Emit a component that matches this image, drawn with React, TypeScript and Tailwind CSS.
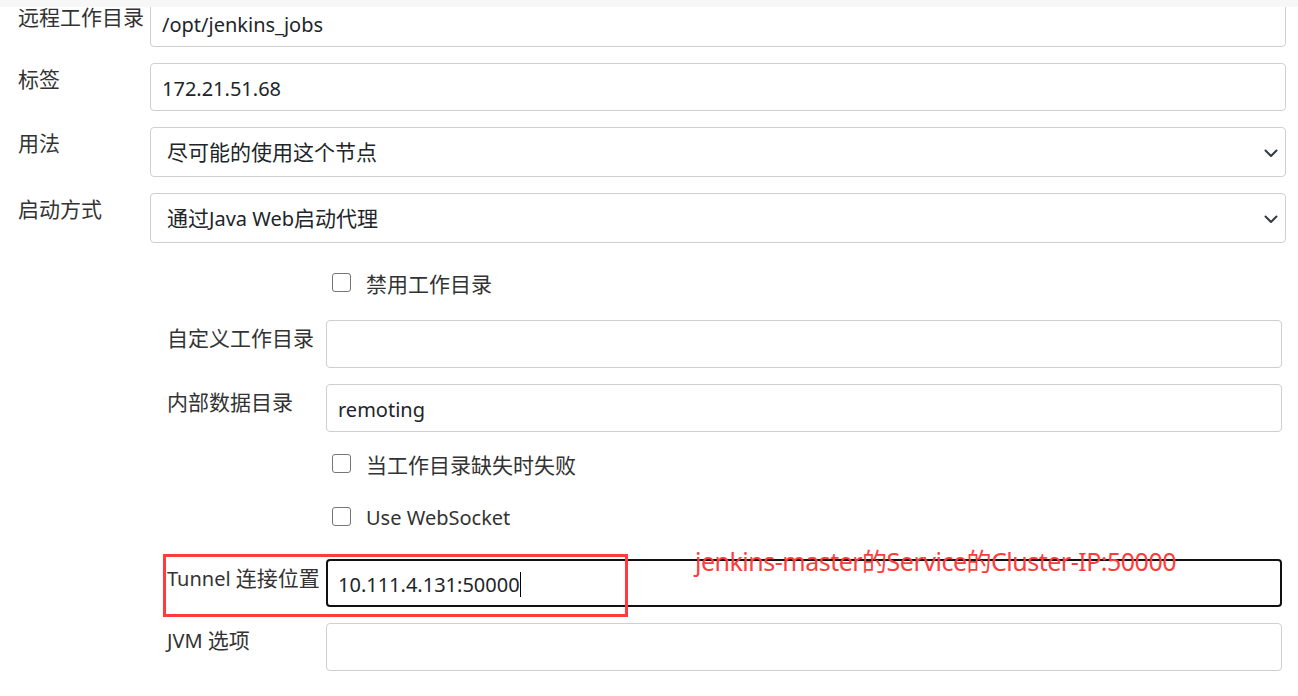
import React from 'react';

const Chevron = () => (
    <svg width="14" height="9" viewBox="0 0 14 9" fill="none" className="shrink-0">
        <path d="M1.5 1.5l5.5 5.5 5.5-5.5" stroke="#343a40" strokeWidth="2" strokeLinecap="round" strokeLinejoin="round" />
    </svg>
);

// CJK glyphs in the original render a touch larger than the latin ones
const Zh = ({ children }: { children: React.ReactNode }) => <span className="text-[21px]">{children}</span>;

const TopRow = ({ label, children, className = '', labelClass = '' }: { label: React.ReactNode; children: React.ReactNode; className?: string; labelClass?: string }) => (
    <div className={`flex items-start ${className}`}>
        <div className={`w-[150px] shrink-0 pl-[18px] leading-[32px] whitespace-nowrap ${labelClass}`}>{label}</div>
        {children}
    </div>
);

const SubRow = ({ label, children, className = '', labelClass = '' }: { label: React.ReactNode; children: React.ReactNode; className?: string; labelClass?: string }) => (
    <div className={`flex items-start ${className}`}>
        <div className={`w-[159px] shrink-0 leading-[32px] whitespace-nowrap ${labelClass}`}>{label}</div>
        {children}
    </div>
);

const CheckRow = ({ label, className = '' }: { label: React.ReactNode; className?: string }) => (
    <div className={`flex items-center h-[32px] pl-[165px] ${className}`}>
        <span className="w-[19px] h-[19px] border border-[#767676] rounded-[3px] bg-white shrink-0" />
        <span className="ml-[15px] pt-[4px] leading-[32px]">{label}</span>
    </div>
);

const inputBox = "flex-1 h-[48px] flex items-center border border-[#cfcfcf] rounded-[4px] bg-white px-[11px] pt-[4px] text-[#212529]";
const selectBox = "flex-1 h-[50px] flex items-center justify-between border border-[#cfcfcf] rounded-[4px] bg-white pl-[16px] pr-[7px] pt-[2px] text-[#212529]";

export default function App() {
    return (
        <div className="relative min-h-[696px] bg-white text-[20px] text-[#333] font-['Segoe_UI','Noto_Sans','Noto_Sans_CJK_SC',sans-serif] overflow-hidden">
            {/* sticky page header edge */}
            <div className="absolute top-0 left-0 right-0 h-[7px] bg-[#f7f7f7] z-10" />

            <div className="-mt-px pr-[12px]">
                <TopRow label={<Zh>远程工作目录</Zh>} labelClass="pt-[2px]">
                    <div className={inputBox}>/opt/jenkins_jobs</div>
                </TopRow>
                <TopRow label={<Zh>标签</Zh>} className="mt-[16px]">
                    <div className={inputBox}>172.21.51.68</div>
                </TopRow>
                <TopRow label={<Zh>用法</Zh>} className="mt-[16px]">
                    <div className={selectBox}>
                        <Zh>尽可能的使用这个节点</Zh>
                        <Chevron />
                    </div>
                </TopRow>
                <TopRow label={<Zh>启动方式</Zh>} className="mt-[16px]">
                    <div className={selectBox}>
                        <span><Zh>通过</Zh>Java Web<Zh>启动代理</Zh></span>
                        <Chevron />
                    </div>
                </TopRow>
            </div>

            <div className="pl-[167px] pr-[16px]">
                <CheckRow label={<Zh>禁用工作目录</Zh>} className="mt-[23px]" />
                <SubRow label={<Zh>自定义工作目录</Zh>} className="mt-[22px]" labelClass="pt-[2px]">
                    <div className={inputBox} />
                </SubRow>
                <SubRow label={<Zh>内部数据目录</Zh>} className="mt-[16px]" labelClass="pt-[2px]">
                    <div className={inputBox}>remoting</div>
                </SubRow>
                <CheckRow label={<Zh>当工作目录缺失时失败</Zh>} className="mt-[15px]" />
                <CheckRow label="Use WebSocket" className="mt-[21px]" />
                <SubRow label={<>Tunnel <Zh>连接位置</Zh></>} className="mt-[27px]" labelClass="pt-[3px]">
                    <div className="flex-1 h-[48px] flex items-center border-2 border-[#111] rounded-[4px] bg-white px-[10px] pt-[3px] text-[#212529]">
                        <span>10.111.4.131:50000</span>
                        <span className="w-px h-[25px] bg-black" />
                    </div>
                </SubRow>
                <SubRow label={<>JVM <Zh>选项</Zh></>} className="mt-[16px]" labelClass="pt-[1px]">
                    <div className={inputBox} />
                </SubRow>
            </div>

            {/* screenshot annotation */}
            <div className="absolute left-[163px] top-[554px] w-[465px] h-[63px] border-[3px] border-[#ff3b3b] pointer-events-none" />
            <div className="absolute left-[695px] top-[544px] text-[25px] leading-[34px] tracking-[-0.5px] text-[#ff3b3b] whitespace-nowrap pointer-events-none">
                jenkins-master的Service的Cluster-IP:50000
            </div>
        </div>
    );
}
